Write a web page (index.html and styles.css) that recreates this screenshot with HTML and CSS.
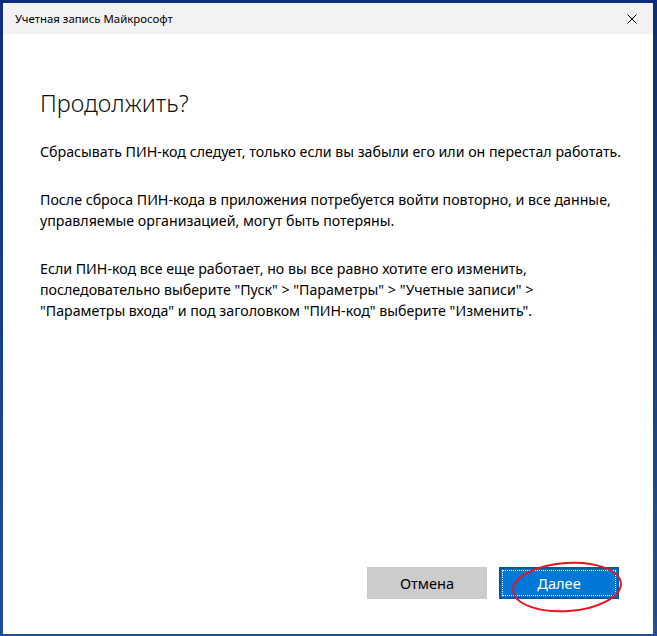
FILE: index.html
```html
<!DOCTYPE html>
<html lang="ru">
<head>
  <meta charset="UTF-8" />
  <title>Учетная запись Майкрософт</title>
  <link rel="stylesheet" href="styles.css">
</head>
<body>
  <div class="window">
    <div class="title-bar">
      <span class="title">Учетная запись Майкрософт</span>
      <svg class="close-btn" width="10" height="10" viewBox="0 0 10 10">
        <path d="M0.5 0.5 L9.5 9.5 M9.5 0.5 L0.5 9.5" stroke="#000" stroke-width="1" fill="none" />
      </svg>
    </div>

    <div class="content">
      <h1>Продолжить?</h1>
      <p>Сбрасывать ПИН-код следует, только если вы забыли его или он перестал работать.</p>
      <p>После сброса ПИН-кода в приложения потребуется войти повторно, и все данные,<br>управляемые организацией, могут быть потеряны.</p>
      <p>Если ПИН-код все еще работает, но вы все равно хотите его изменить,<br>последовательно выберите "Пуск" &gt; "Параметры" &gt; "Учетные записи" &gt;<br>"Параметры входа" и под заголовком "ПИН-код" выберите "Изменить".</p>
    </div>

    <div class="footer">
      <button class="btn btn-cancel">Отмена</button>
      <button class="btn btn-next">Далее</button>
    </div>
  </div>

  <!-- red highlight drawn over the screenshot -->
  <svg class="mark" width="120" height="60" viewBox="0 0 120 60">
    <ellipse cx="60" cy="30" rx="54" ry="24" transform="rotate(-4 60 30)" fill="none" stroke="#e8141e" stroke-width="2" />
  </svg>
</body>
</html>
```

FILE: styles.css
```css
body {
  margin: 0;
  padding: 0;
  width: 657px;
  height: 636px;
  overflow: hidden;
  background: linear-gradient(180deg, #0f2c7a, #1f4f9a);
  font-family: 'Segoe UI', 'Noto Sans', 'Open Sans', sans-serif;
  position: relative;
}

.window {
  margin: 3px 4px 0 3px;
  height: 631px;
  background: #ffffff;
  display: flex;
  flex-direction: column;
}

.title-bar {
  height: 31px;
  flex-shrink: 0;
  background: #f2f2f2;
  display: flex;
  justify-content: space-between;
  align-items: center;
  padding: 0 16px 0 12px;
}

.title {
  font-size: 11.4px;
  color: #000;
}

.close-btn {
  display: block;
}

.content {
  flex: 1;
  padding: 53px 34px 0 37px;
  color: #000;
}

h1 {
  font-size: 23.5px;
  font-weight: 300;
  line-height: 32px;
  margin: 0 0 22px 0;
  color: #111;
}

p {
  font-size: 14.2px;
  line-height: 21px;
  margin: 0 0 27px 0;
  white-space: nowrap;
}

.footer {
  display: flex;
  justify-content: flex-end;
  gap: 12px;
  padding: 0 34px 35px 0;
}

.btn {
  width: 120px;
  height: 32px;
  font-family: inherit;
  font-size: 14.6px;
  border: none;
  padding: 0;
}

.btn-cancel {
  background: #cccccc;
  color: #000;
}

.btn-next {
  background: #0078d7;
  color: #fff;
  border: 2px solid #005a9e;
  outline: 1px dotted #fff;
  outline-offset: -4px;
}

.mark {
  position: absolute;
  left: 507px;
  top: 557px;
}
```
